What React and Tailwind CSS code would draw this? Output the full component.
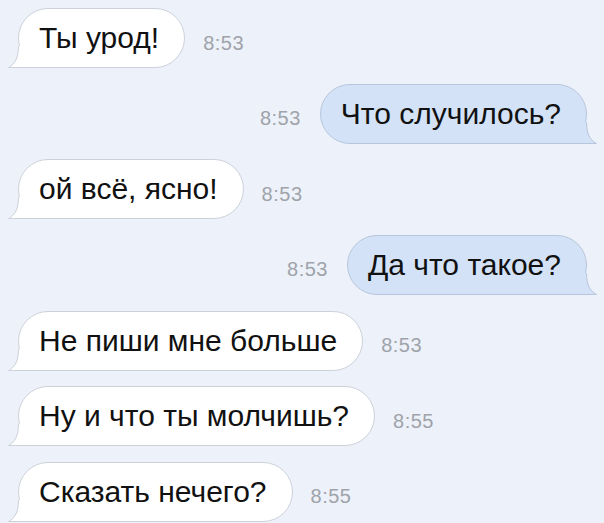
const messages = [
  { text: "Ты урод!", time: "8:53", out: false },
  { text: "Что случилось?", time: "8:53", out: true },
  { text: "ой всё, ясно!", time: "8:53", out: false },
  { text: "Да что такое?", time: "8:53", out: true },
  { text: "Не пиши мне больше", time: "8:53", out: false },
  { text: "Ну и что ты молчишь?", time: "8:55", out: false },
  { text: "Сказать нечего?", time: "8:55", out: false },
];

function Tail({ out }) {
  // small curled tail at the bottom corner of the bubble
  if (out) {
    return (
      <svg
        className="absolute right-[-11px] bottom-[-1px]"
        width="40"
        height="30"
        viewBox="0 0 40 30"
      >
        <path d="M29.5 8 C29.5 20 33 26 39.5 29.5 L0 29.5 L0 6 Z" fill="#d3e2f6" />
        <path
          d="M29.5 8 C29.5 20 33 26 39.5 29.5 L0 29.5"
          fill="none"
          stroke="#b7c6dc"
          strokeWidth="1"
        />
      </svg>
    );
  }
  return (
    <svg
      className="absolute left-[-11px] bottom-[-1px]"
      width="40"
      height="30"
      viewBox="0 0 40 30"
    >
      <path d="M10.5 8 C10.5 20 7 26 0.5 29.5 L40 29.5 L40 6 Z" fill="#ffffff" />
      <path
        d="M10.5 8 C10.5 20 7 26 0.5 29.5 L40 29.5"
        fill="none"
        stroke="#cdd1d9"
        strokeWidth="1"
      />
    </svg>
  );
}

function Bubble({ text, out }) {
  return (
    <div
      className={
        out
          ? "relative flex h-[60px] items-center rounded-[30px] border border-[#b7c6dc] bg-[#d3e2f6] pl-[20px] pr-[25px]"
          : "relative flex h-[60px] items-center rounded-[30px] border border-[#cdd1d9] bg-white pl-[20px] pr-[25px]"
      }
    >
      <span className="relative z-10 whitespace-nowrap text-[30px] leading-[34px] text-[#111]">
        {text}
      </span>
      <Tail out={out} />
    </div>
  );
}

function Time({ time }) {
  return (
    <span className="pt-[9px] text-[20px] tracking-[0.5px] text-[#9fa3aa]">{time}</span>
  );
}

export default function App() {
  return (
    <div
      className="flex h-[523px] w-[604px] flex-col gap-[15.67px] overflow-hidden bg-[#edf1f9] pt-[8px]"
      style={{ fontFamily: '"Liberation Sans", Arial, sans-serif' }}
    >
      {messages.map((m, i) =>
        m.out ? (
          <div key={i} className="flex items-center justify-end gap-[19px] pr-[17px]">
            <Time time={m.time} />
            <Bubble text={m.text} out />
          </div>
        ) : (
          <div key={i} className="flex items-center gap-[18px] pl-[18px]">
            <Bubble text={m.text} />
            <Time time={m.time} />
          </div>
        )
      )}
    </div>
  );
}
